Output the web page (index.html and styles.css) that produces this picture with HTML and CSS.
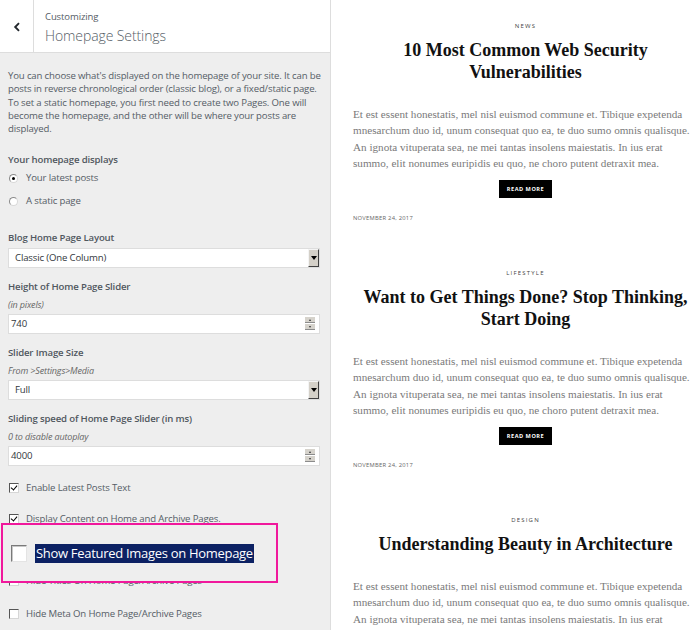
FILE: index.html
```html
<!DOCTYPE html>
<html lang="en">
<head>
<meta charset="utf-8">
<title>Customizing Homepage Settings</title>
<link rel="stylesheet" href="styles.css">
</head>
<body>
<div class="app">
  <aside class="sidebar">
    <header class="head">
      <div class="back">
        <svg width="8" height="10" viewBox="0 0 8 10"><path d="M6 1.2 L2.2 5 L6 8.8" fill="none" stroke="#23282d" stroke-width="1.9"/></svg>
      </div>
      <div class="titles">
        <div class="crumb">Customizing</div>
        <div class="title">Homepage Settings</div>
      </div>
    </header>

    <div class="controls">
      <p class="desc">You can choose what's displayed on the homepage of your site. It can be<br>posts in reverse chronological order (classic blog), or a fixed/static page.<br>To set a static homepage, you first need to create two Pages. One will<br>become the homepage, and the other will be where your posts are<br>displayed.</p>

      <div class="group">
        <div class="label">Your homepage displays</div>
        <div class="radio-row first"><span class="radio on"></span><span>Your latest posts</span></div>
        <div class="radio-row"><span class="radio"></span><span>A static page</span></div>
      </div>

      <div class="field first-field">
        <div class="label">Blog Home Page Layout</div>
        <div class="select"><span>Classic (One Column)</span><span class="drop"><span class="tri"></span></span></div>
      </div>

      <div class="field">
        <div class="label">Height of Home Page Slider</div>
        <div class="note">(in pixels)</div>
        <div class="number"><span>740</span><span class="spin"><span class="up"></span><span class="down"></span></span></div>
      </div>

      <div class="field">
        <div class="label">Slider Image Size</div>
        <div class="note">From &gt;Settings&gt;Media</div>
        <div class="select"><span>Full</span><span class="drop"><span class="tri"></span></span></div>
      </div>

      <div class="field">
        <div class="label">Sliding speed of Home Page Slider (in ms)</div>
        <div class="note">0 to disable autoplay</div>
        <div class="number"><span>4000</span><span class="spin"><span class="up"></span><span class="down"></span></span></div>
      </div>

      <div class="checks">
        <div class="check-row"><span class="cb on"></span><span>Enable Latest Posts Text</span></div>
        <div class="check-row"><span class="cb on"></span><span>Display Content on Home and Archive Pages.</span></div>
        <div class="check-row"><span class="cb"></span><span>Show Featured Images on Homepage</span></div>
        <div class="check-row"><span class="cb"></span><span>Hide Titles On Home Page/Archive Pages</span></div>
        <div class="check-row last"><span class="cb"></span><span>Hide Meta On Home Page/Archive Pages</span></div>
      </div>
    </div>

    <div class="callout">
      <span class="big-cb"></span>
      <span class="hl">Show Featured Images on Homepage</span>
    </div>
  </aside>

  <main class="preview">
    <article class="post">
      <div class="cat">NEWS</div>
      <h2 class="ptitle">10 Most Common Web Security<br>Vulnerabilities</h2>
      <p class="body">Et est essent honestatis, mel nisl euismod commune et. Tibique expetenda<br>mnesarchum duo id, unum consequat quo ea, te duo sumo omnis qualisque.<br>An ignota vituperata sea, ne mei tantas insolens maiestatis. In ius erat<br>summo, elit nonumes euripidis eu quo, ne choro putent detraxit mea.</p>
      <div class="more-wrap"><span class="more">READ MORE</span></div>
      <div class="date">NOVEMBER 24, 2017</div>
    </article>
    <article class="post">
      <div class="cat">LIFESTYLE</div>
      <h2 class="ptitle">Want to Get Things Done? Stop Thinking,<br>Start Doing</h2>
      <p class="body">Et est essent honestatis, mel nisl euismod commune et. Tibique expetenda<br>mnesarchum duo id, unum consequat quo ea, te duo sumo omnis qualisque.<br>An ignota vituperata sea, ne mei tantas insolens maiestatis. In ius erat<br>summo, elit nonumes euripidis eu quo, ne choro putent detraxit mea.</p>
      <div class="more-wrap"><span class="more">READ MORE</span></div>
      <div class="date">NOVEMBER 24, 2017</div>
    </article>
    <article class="post">
      <div class="cat">DESIGN</div>
      <h2 class="ptitle">Understanding Beauty in Architecture</h2>
      <p class="body">Et est essent honestatis, mel nisl euismod commune et. Tibique expetenda<br>mnesarchum duo id, unum consequat quo ea, te duo sumo omnis qualisque.<br>An ignota vituperata sea, ne mei tantas insolens maiestatis. In ius erat<br>summo, elit nonumes euripidis eu quo, ne choro putent detraxit mea.</p>
    </article>
  </main>
</div>
</body>
</html>
```

FILE: styles.css
```css
* { box-sizing: border-box; }
html, body { margin: 0; padding: 0; }
body {
  width: 700px;
  height: 630px;
  overflow: hidden;
  background: #fff;
  font-family: "Open Sans", "Noto Sans", sans-serif;
}
.app {
  display: flex;
  height: 630px;
}

/* ---------- sidebar ---------- */
.sidebar {
  position: relative;
  width: 331px;
  flex: none;
  background: #eeeeee;
  border-right: 1px solid #dddddd;
  color: #555d66;
  overflow: hidden;
}
.head {
  display: flex;
  height: 53px;
  background: #fff;
  border-bottom: 1px solid #dddddd;
}
.back {
  width: 34px;
  flex: none;
  border-right: 1px solid #dddddd;
  display: flex;
  align-items: center;
  justify-content: center;
  padding-top: 2px;
}
.titles {
  padding: 10px 0 0 11px;
}
.crumb {
  font-size: 9.5px;
  line-height: 14px;
  color: #555d66;
  letter-spacing: -0.1px;
}
.title {
  font-size: 14px;
  line-height: 20px;
  margin-top: 2px;
  color: #555d66;
  font-weight: 300;
  letter-spacing: -0.1px;
}

.controls {
  padding: 16px 10px 0 8px;
  font-size: 9.6px;
  letter-spacing: -0.15px;
}
.desc {
  margin: 0;
  line-height: 13.3px;
  white-space: nowrap;
  color: #555d66;
}
.label {
  font-weight: 600;
  line-height: 14px;
  color: #50575e;
  white-space: nowrap;
}
.group { margin-top: 18px; }
.radio-row {
  display: flex;
  align-items: center;
  gap: 8px;
  line-height: 14px;
  margin-top: 8.7px;
  padding-left: 1px;
}
.radio-row.first { margin-top: 4px; }
.radio {
  width: 9px;
  height: 9px;
  border-radius: 50%;
  background: #fff;
  border: 1px solid #8a8a8a;
  border-right-color: #d8d8d8;
  border-bottom-color: #d8d8d8;
  display: flex;
  align-items: center;
  justify-content: center;
}
.radio.on::after {
  content: "";
  width: 3px;
  height: 3px;
  border-radius: 50%;
  background: #000;
}

.field { margin-top: 12px; }
.field.first-field { margin-top: 22.7px; }
.note {
  margin-top: 5px;
  font-style: italic;
  line-height: 12px;
  font-size: 9px;
  color: #666;
}
.select, .number {
  margin-top: 3px;
  height: 20px;
  background: #fff;
  border: 1px solid #dddddd;
  display: flex;
  align-items: center;
  justify-content: space-between;
  color: #32373c;
}
.select { padding-left: 6px; }
.number { padding-left: 2px; padding-right: 4px; }
.drop {
  width: 11px;
  height: 18px;
  background: #d4d0c8;
  border-top: 1px solid #f4f4f4;
  border-left: 1px solid #f4f4f4;
  border-right: 1px solid #404040;
  border-bottom: 1px solid #404040;
  display: flex;
  align-items: center;
  justify-content: center;
}
.tri {
  width: 0;
  height: 0;
  border-left: 3px solid transparent;
  border-right: 3px solid transparent;
  border-top: 4px solid #000;
}
.spin {
  width: 10px;
  height: 13px;
  display: flex;
  flex-direction: column;
  gap: 1px;
}
.spin span {
  flex: 1;
  background: #d6d3cc;
  border-bottom: 1px solid #8c8c8c;
  display: flex;
  align-items: center;
  justify-content: center;
}
.spin .up::after, .spin .down::after {
  content: "";
  width: 0;
  height: 0;
  border-left: 1.5px solid transparent;
  border-right: 1.5px solid transparent;
}
.spin .up::after { border-bottom: 2px solid #333; }
.spin .down::after { border-top: 2px solid #333; }

.checks { margin-top: 15.3px; }
.check-row {
  display: flex;
  align-items: center;
  gap: 7px;
  line-height: 14px;
  margin-top: 17px;
  padding-left: 1px;
  white-space: nowrap;
}
.check-row:first-child { margin-top: 0; }
.check-row.last { margin-top: 19px; }
.cb {
  width: 10px;
  height: 10px;
  background: #fff;
  border: 1px solid #555;
  border-right-color: #d6d6d6;
  border-bottom-color: #d6d6d6;
  position: relative;
}
.cb.on::after {
  content: "";
  position: absolute;
  left: 2px;
  top: 0px;
  width: 3px;
  height: 5px;
  border-right: 1.6px solid #000;
  border-bottom: 1.6px solid #000;
  transform: rotate(40deg);
}

.callout {
  position: absolute;
  left: 1px;
  top: 523px;
  width: 277px;
  height: 60px;
  border: 2px solid #f0189c;
  background: #eeeeee;
  display: flex;
  align-items: center;
  padding-left: 8px;
  gap: 8px;
}
.big-cb {
  width: 16px;
  height: 17px;
  background: #fff;
  border: 1px solid #7a7a7a;
  border-right-color: #e4e4e4;
  border-bottom-color: #e4e4e4;
  box-shadow: inset 1px 1px 0 #c8c8c8;
}
.hl {
  background: #0c2163;
  color: #fff;
  font-size: 13px;
  line-height: 19px;
  letter-spacing: -0.3px;
  padding: 0 1px;
  white-space: nowrap;
}

/* ---------- preview ---------- */
.preview {
  flex: 1;
  overflow: hidden;
  padding: 21px 0 0 22px;
}
.post {
  width: 345px;
  text-align: center;
  margin-bottom: 45.5px;
}
.cat {
  font-size: 6px;
  line-height: 10px;
  letter-spacing: 1.2px;
  color: #444;
  font-family: "Open Sans", sans-serif;
}
.ptitle {
  margin: 8px 0 0;
  font-family: "Liberation Serif", serif;
  font-weight: 700;
  font-size: 18px;
  line-height: 22px;
  color: #111;
  white-space: nowrap;
}
.body {
  margin: 22.5px 0 0;
  text-align: left;
  font-family: "Liberation Serif", serif;
  font-size: 11.15px;
  line-height: 16.5px;
  color: #7a7a7a;
  white-space: nowrap;
}
.more-wrap {
  margin-top: 8.5px;
  display: flex;
  justify-content: center;
}
.more {
  display: flex;
  align-items: center;
  justify-content: center;
  width: 53px;
  height: 18px;
  background: #000;
  color: #fff;
  font-size: 5.6px;
  font-weight: 700;
  letter-spacing: 0.5px;
  font-family: "Open Sans", sans-serif;
}
.date {
  margin-top: 14.5px;
  text-align: left;
  font-size: 5.8px;
  line-height: 10px;
  letter-spacing: 0.25px;
  color: #666;
  font-family: "Open Sans", sans-serif;
}
```
